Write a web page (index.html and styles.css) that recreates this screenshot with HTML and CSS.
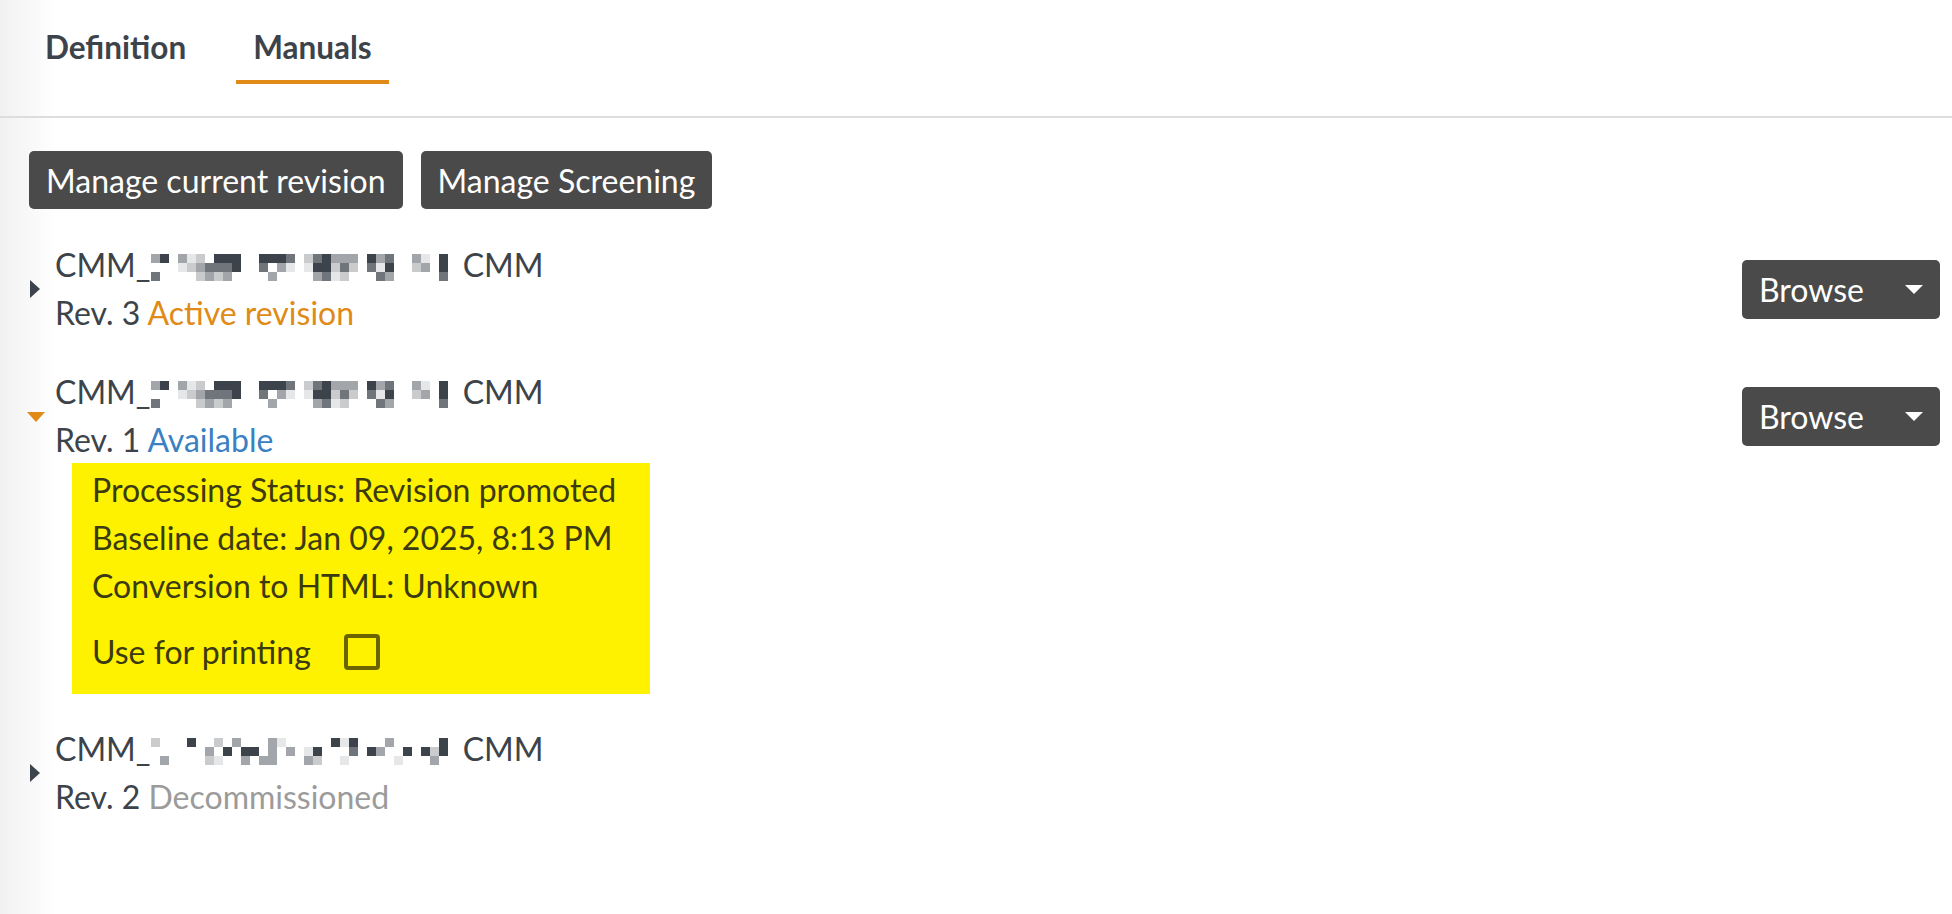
FILE: index.html
```html
<!DOCTYPE html>
<html lang="en">
<head>
    <meta charset="UTF-8">
    <meta name="viewport" content="width=device-width, initial-scale=1.0">
    <title>Manuals</title>
    <link rel="stylesheet" href="styles.css">
</head>
<body>
    <div class="tabs">
        <div class="tab">Definition</div>
        <div class="tab active">Manuals</div>
    </div>

    <div class="content">
        <div class="actions">
            <button class="btn">Manage current revision</button>
            <button class="btn">Manage Screening</button>
        </div>

        <div class="manual">
            <div class="manual-head">
                <span class="caret right"></span>
                <div class="manual-info">
                    <div class="manual-name">CMM_<span class="blur" data-rows="35 312 555  5554 245333 534  31 5 |   1234445  4 31 155242 415  23 5 |4    2323    3    3412   43     4 "></span> CMM</div>
                    <div class="manual-rev">Rev. 3 <span class="status active">Active revision</span></div>
                </div>
                <button class="btn browse">Browse <span class="drop"></span></button>
            </div>
        </div>

        <div class="manual">
            <div class="manual-head">
                <span class="caret down"></span>
                <div class="manual-info">
                    <div class="manual-name">CMM_<span class="blur" data-rows="35 312 555  5554 245333 534  31 5 |   1234445  4 31 155242 415  23 5 |4    2323    3    3412   43     4 "></span> CMM</div>
                    <div class="manual-rev">Rev. 1 <span class="status available">Available</span></div>
                </div>
                <button class="btn browse">Browse <span class="drop"></span></button>
            </div>
            <div class="details">
                <div>Processing Status: Revision promoted</div>
                <div>Baseline date: Jan 09, 2025, 8:13 PM</div>
                <div>Conversion to HTML: Unknown</div>
                <label class="print">Use for printing <span class="checkbox"></span></label>
            </div>
        </div>

        <div class="manual">
            <div class="manual-head">
                <span class="caret right"></span>
                <div class="manual-info">
                    <div class="manual-name">CMM_<span class="blur" data-rows="2   5  2 3   31     515   3     5 |      3 5 55 3 3 15   4 53  5 525 | 3    21  3 33   32  1     1   3  "></span> CMM</div>
                    <div class="manual-rev">Rev. 2 <span class="status decommissioned">Decommissioned</span></div>
                </div>
            </div>
        </div>
    </div>

    <script>
        const shades = {
            '1': '#e6e7e8',
            '2': '#c9cbcd',
            '3': '#a2a6aa',
            '4': '#6f757b',
            '5': '#3d434a'
        };

        // pixelated part of the manual name, one string per row of cells
        document.querySelectorAll('.blur').forEach(blur => {
            const rows = blur.dataset.rows.split('|');
            rows.forEach(row => {
                for (const ch of row.padEnd(34, ' ').slice(0, 34)) {
                    const cell = document.createElement('i');
                    if (shades[ch]) cell.style.background = shades[ch];
                    blur.appendChild(cell);
                }
            });
        });
    </script>
</body>
</html>
```

FILE: styles.css
```css
body {
    margin: 0;
    min-height: 100vh;
    font-family: Lato, "Open Sans", sans-serif;
    font-size: 32px;
    color: #3d434a;
    background: linear-gradient(to right, #f1f1f1 0, #ffffff 56px);
}

.tabs {
    display: flex;
    gap: 33px;
    padding: 0 0 32px 28px;
    border-bottom: 2px solid #dddddd;
}

.tab {
    padding: 32px 17px 18px;
    line-height: 30px;
    font-size: 31.5px;
    font-weight: 700;
    border-bottom: 4px solid transparent;
    cursor: pointer;
}

.tab.active {
    border-bottom-color: #e08a17;
}

.content {
    padding: 33px 12px 0 29px;
}

.actions {
    display: flex;
    gap: 18px;
    margin-bottom: 32px;
}

.btn {
    font-family: inherit;
    font-size: 32px;
    height: 58px;
    padding: 0 17px;
    color: #ffffff;
    background-color: #4a4a4a;
    border: none;
    border-radius: 5px;
    cursor: pointer;
}

.manual {
    margin-bottom: 31px;
}

.manual-head {
    display: flex;
    align-items: center;
}

.caret {
    width: 28px;
    flex-shrink: 0;
    margin-left: -2px;
}

.caret.right::before {
    content: "";
    display: block;
    margin-left: 3px;
    border-top: 9px solid transparent;
    border-bottom: 9px solid transparent;
    border-left: 10px solid #3d434a;
    width: 0;
}

.caret.down::before {
    content: "";
    display: block;
    margin-top: 2px;
    border-left: 9px solid transparent;
    border-right: 9px solid transparent;
    border-top: 10px solid #e08a17;
    width: 0;
}

.manual-info {
    flex: 1;
    line-height: 48px;
}

.blur {
    display: inline-grid;
    grid-template-columns: repeat(34, 9px);
    grid-auto-rows: 9px;
    margin-top: 13px;
    margin-right: -2px;
    vertical-align: top;
}

.blur i {
    display: block;
}

.status.active {
    color: #e08a17;
}

.status.available {
    color: #3a80c2;
}

.status.decommissioned {
    color: #9b9b9b;
}

.browse {
    width: 198px;
    height: 59px;
    display: flex;
    align-items: center;
    justify-content: space-between;
    padding: 0 17px 0 17px;
}

.drop {
    width: 0;
    border-left: 9px solid transparent;
    border-right: 9px solid transparent;
    border-top: 9px solid #ffffff;
}

.details {
    width: 578px;
    box-sizing: border-box;
    margin: -1px 0 4px 43px;
    padding: 3px 20px 24px;
    line-height: 48px;
    color: #3b3a10;
    background-color: #fff200;
}

.print {
    display: flex;
    align-items: center;
    gap: 33px;
    margin-top: 24px;
    line-height: 36px;
}

.checkbox {
    width: 36px;
    height: 36px;
    box-sizing: border-box;
    border: 4px solid #6b6200;
    border-radius: 4px;
}
```
